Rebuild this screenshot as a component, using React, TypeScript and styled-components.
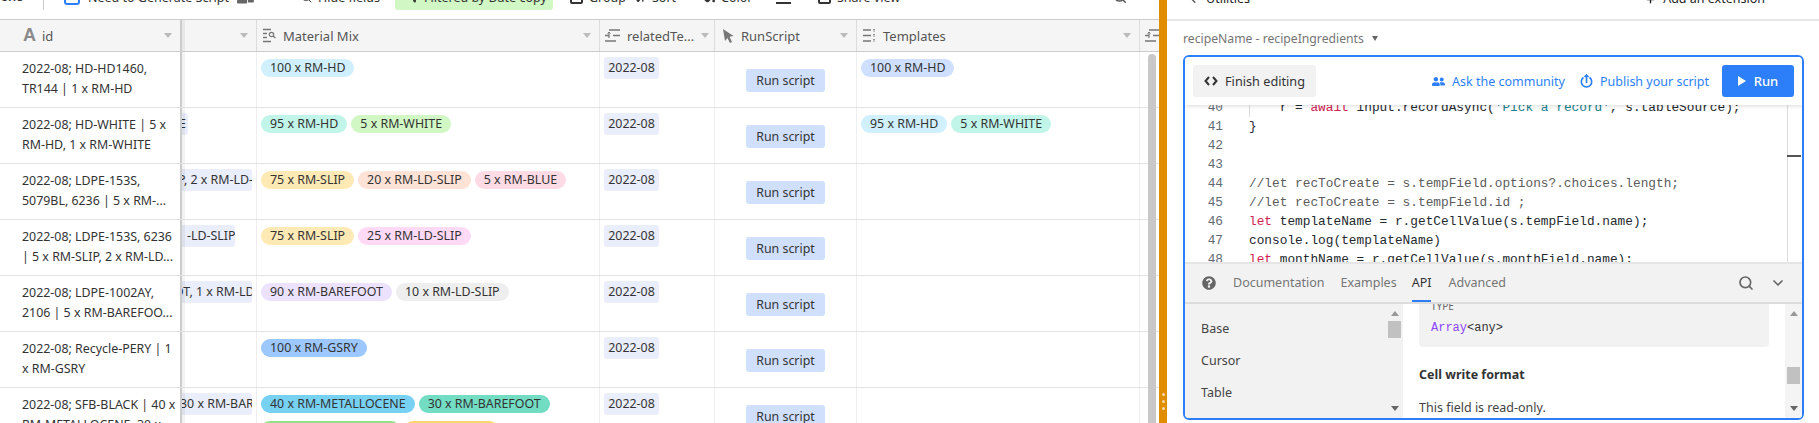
import React from "react";
import styled, { createGlobalStyle } from "styled-components";
import { FaQuestionCircle, FaUserFriends, FaFillDrip } from "react-icons/fa";
import { Search, ChevronDown, ChevronLeft, Plus, ArrowDownUp, EyeOff, Filter } from "lucide-react";

const GlobalStyle = createGlobalStyle`
  html, body {
    margin: 0;
    height: 423px;
    overflow: hidden;
    background: #fff;
    font-family: "Noto Sans", "Liberation Sans", sans-serif;
    font-size: 12.4px;
    color: #333;
  }
`;

const COLUMNS = "182px 75px 343px 115px 142px 283px 1fr";

type Pill = { label: string; color: string };
type Row = {
  id: string[];
  partial?: { label: string; width: number; indent: number };
  mix: Pill[];
  templates: Pill[];
};

const ROWS: Row[] = [
  {
    id: ["2022-08; HD-HD1460,", "TR144 | 1 x RM-HD"],
    mix: [{ label: "100 x RM-HD", color: "#d0f0fd" }],
    templates: [{ label: "100 x RM-HD", color: "#cfdfff" }],
  },
  {
    id: ["2022-08; HD-WHITE | 5 x", "RM-HD, 1 x RM-WHITE"],
    partial: { label: "E", width: 6, indent: -3 },
    mix: [
      { label: "95 x RM-HD", color: "#c2f5e9" },
      { label: "5 x RM-WHITE", color: "#d1f7c4" },
    ],
    templates: [
      { label: "95 x RM-HD", color: "#d0f0fd" },
      { label: "5 x RM-WHITE", color: "#c2f5e9" },
    ],
  },
  {
    id: ["2022-08; LDPE-153S,", "5079BL, 6236 | 5 x RM-..."],
    partial: { label: "P, 2 x RM-LD-SLIP", width: 70, indent: -4 },
    mix: [
      { label: "75 x RM-SLIP", color: "#ffeab6" },
      { label: "20 x RM-LD-SLIP", color: "#fee2d5" },
      { label: "5 x RM-BLUE", color: "#ffdce5" },
    ],
    templates: [],
  },
  {
    id: ["2022-08; LDPE-153S, 6236", "| 5 x RM-SLIP, 2 x RM-LD..."],
    partial: { label: "-LD-SLIP", width: 53, indent: 5 },
    mix: [
      { label: "75 x RM-SLIP", color: "#ffeab6" },
      { label: "25 x RM-LD-SLIP", color: "#ffdaf6" },
    ],
    templates: [],
  },
  {
    id: ["2022-08; LDPE-1002AY,", "2106 | 5 x RM-BAREFOO..."],
    partial: { label: "OT, 1 x RM-LD-SLIP", width: 70, indent: -8 },
    mix: [
      { label: "90 x RM-BAREFOOT", color: "#ede2fe" },
      { label: "10 x RM-LD-SLIP", color: "#eeeeee" },
    ],
    templates: [],
  },
  {
    id: ["2022-08; Recycle-PERY | 1", "x RM-GSRY"],
    mix: [{ label: "100 x RM-GSRY", color: "#9cc7ff" }],
    templates: [],
  },
  {
    id: ["2022-08; SFB-BLACK | 40 x", "RM-METALLOCENE, 30 x ..."],
    partial: { label: "30 x RM-BAREFOOT", width: 70, indent: -2 },
    mix: [
      { label: "40 x RM-METALLOCENE", color: "#77d1f3" },
      { label: "30 x RM-BAREFOOT", color: "#72ddc3" },
      { label: "20 x RM-BLACK-BASE", color: "#93e088" },
      { label: "10 x RM-SLIP", color: "#ffd66e" },
    ],
    templates: [],
  },
];

type Token = { text: string; kind?: "kw" | "str" | "com" };

const CODE: { no: number; tokens: Token[] }[] = [
  {
    no: 40,
    tokens: [
      { text: "    r = " },
      { text: "await", kind: "kw" },
      { text: " input.recordAsync(" },
      { text: "'Pick a record'", kind: "str" },
      { text: ", s.tableSource);" },
    ],
  },
  { no: 41, tokens: [{ text: "}" }] },
  { no: 42, tokens: [] },
  { no: 43, tokens: [] },
  { no: 44, tokens: [{ text: "//let recToCreate = s.tempField.options?.choices.length;", kind: "com" }] },
  { no: 45, tokens: [{ text: "//let recToCreate = s.tempField.id ;", kind: "com" }] },
  {
    no: 46,
    tokens: [{ text: "let", kind: "kw" }, { text: " templateName = r.getCellValue(s.tempField.name);" }],
  },
  { no: 47, tokens: [{ text: "console.log(templateName)" }] },
  {
    no: 48,
    tokens: [{ text: "let", kind: "kw" }, { text: " monthName = r.getCellValue(s.monthField.name);" }],
  },
];

const Caret = () => <CaretMark />;

const LookupIcon = () => (
  <FieldSvg width="13" height="15" viewBox="0 0 13 15" fill="none" stroke="#777" strokeWidth="1.5">
    <path d="M0 1.500h8M0 5.500h4M0 9.500h4M0 13.500h8" />
    <circle cx="8.500" cy="6.500" r="2.200" strokeWidth="1.200" />
    <path d="M10 8l2.500 2" strokeWidth="1.200" />
  </FieldSvg>
);

const FormulaIcon = () => (
  <FieldSvg width="15" height="13" viewBox="0 0 15 13" fill="none" stroke="#777" strokeWidth="1.500">
    <path d="M4 1h11M0 6.500h4M8 6.500h7M0 12h11" />
    <path d="M4 4v5" strokeWidth="1.200" />
    <path d="M2.500 4.500L4 3l1.500 1.500" strokeWidth="1" />
  </FieldSvg>
);

const CursorIcon = () => (
  <FieldSvg width="11" height="14" viewBox="0 0 11 14" fill="#777">
    <path d="M0 0l10.500 7-4 .8L9 13l-2 1-2.600-5L2 12z" />
  </FieldSvg>
);

const TemplatesIcon = () => (
  <FieldSvg width="13" height="13" viewBox="0 0 13 13" fill="none" stroke="#777" strokeWidth="1.500">
    <path d="M0 1h8M0 6.500h8M0 12h8" />
    <path d="M11 0v3M11 5v3M11 10v3" strokeDasharray="1.500 1" />
  </FieldSvg>
);

const CodeBracketsIcon = () => (
  <svg width="14" height="10" viewBox="0 0 14 10" fill="none" stroke="#333" strokeWidth="2">
    <path d="M5 1L1.500 5 5 9M9 1l3.500 4L9 9" />
  </svg>
);

const PublishIcon = () => (
  <svg width="13" height="14" viewBox="0 0 13 14" fill="none" stroke="#2d7ff9" strokeWidth="1.600">
    <path d="M3.500 3.500a5.200 5.200 0 1 0 6 0" />
    <path d="M6.500 9V1M4.500 3l2-2 2 2" />
  </svg>
);

const ScrollArrow = ({ down }: { down?: boolean }) => <ArrowMark $down={down} />;

const App = () => (
  <>
    <GlobalStyle />
    <Page>
      <LeftPane>
        <Toolbar>
          <ViewsGroup>Views</ViewsGroup>
          <ToolDivider />
          <ToolGroup $width={236} $gap={8}>
            <ViewIcon />
            Need to Generate Script
            <FaUserFriends size={17} color="#666" />
          </ToolGroup>
          <ToolGroup $width={95} $gap={6}>
            <EyeOff size={12} color="#333" />
            Hide fields
          </ToolGroup>
          <FilterChip>
            <Filter size={11} color="#333" fill="#333" />
            Filtered by Date copy
          </FilterChip>
          <ToolGroup $width={82} $gap={6} $inset={17}>
            <ToolBox />
            Group
          </ToolGroup>
          <ToolGroup $width={68} $gap={6}>
            <ArrowDownUp size={11} color="#333" strokeWidth={3} />
            Sort
          </ToolGroup>
          <ToolGroup $width={73} $gap={6}>
            <FaFillDrip size={12} color="#333" />
            Color
          </ToolGroup>
          <ToolGroup $width={42} $gap={0}>
            <ToolLines />
          </ToolGroup>
          <ToolGroup $width={295} $gap={6}>
            <ToolBox />
            Share view
          </ToolGroup>
          <ToolGroup $width={16} $gap={0}>
            <Search size={14} color="#555" strokeWidth={2.500} />
          </ToolGroup>
        </Toolbar>
        <Grid>
          <HeaderRow>
            <FrozenHeader>
              <FieldLetter>A</FieldLetter>
              <HeaderLabel>id</HeaderLabel>
              <Caret />
            </FrozenHeader>
            <HeaderCell>
              <HeaderLabel />
              <Caret />
            </HeaderCell>
            <HeaderCell>
              <LookupIcon />
              <HeaderLabel>Material Mix</HeaderLabel>
              <Caret />
            </HeaderCell>
            <HeaderCell $compact>
              <FormulaIcon />
              <HeaderLabel>relatedTe...</HeaderLabel>
              <Caret />
            </HeaderCell>
            <HeaderCell $inset={8}>
              <CursorIcon />
              <HeaderLabel>RunScript</HeaderLabel>
              <Caret />
            </HeaderCell>
            <HeaderCell>
              <TemplatesIcon />
              <HeaderLabel>Templates</HeaderLabel>
              <Caret />
            </HeaderCell>
            <TrailingHeader>
              <FormulaIcon />
            </TrailingHeader>
          </HeaderRow>
          {ROWS.map((row) => (
            <DataRow key={row.id[0]}>
              <FrozenCell>
                {row.id.map((line) => (
                  <IdLine key={line}>{line}</IdLine>
                ))}
              </FrozenCell>
              <Cell>
                {row.partial && (
                  <PartialChip $width={row.partial.width} $indent={row.partial.indent}>
                    {row.partial.label}
                  </PartialChip>
                )}
              </Cell>
              <PillCell>
                {row.mix.map((pill) => (
                  <Tag key={pill.label} $color={pill.color}>{pill.label}</Tag>
                ))}
              </PillCell>
              <DateCell>
                <DateChip>2022-08</DateChip>
              </DateCell>
              <ButtonCell>
                <RunScriptButton>Run script</RunScriptButton>
              </ButtonCell>
              <PillCell>
                {row.templates.map((pill) => (
                  <Tag key={pill.label} $color={pill.color}>{pill.label}</Tag>
                ))}
              </PillCell>
              <Cell />
            </DataRow>
          ))}
          <GridScrollbar />
        </Grid>
      </LeftPane>
      <Splitter>
        <SplitterDot />
        <SplitterDot />
        <SplitterDot />
      </Splitter>
      <RightPane>
        <PaneTop>
          <PaneTopLabel>
            <ChevronLeft size={11} strokeWidth={3} color="#555" />
            Utilities
          </PaneTopLabel>
          <PaneTopLabel>
            <Plus size={11} strokeWidth={3} color="#222" />
            Add an extension
          </PaneTopLabel>
        </PaneTop>
        <ScriptName>
          recipeName - recipeIngredients
          <NameCaret />
        </ScriptName>
        <ScriptBox>
          <ScriptToolbar>
            <FinishButton>
              <CodeBracketsIcon />
              Finish editing
            </FinishButton>
            <ToolLink $ml="auto">
              <FaUserFriends size={13} color="#2d7ff9" />
              Ask the community
            </ToolLink>
            <ToolLink $ml="15px">
              <PublishIcon />
              Publish your script
            </ToolLink>
            <RunButton>
              <PlayMark />
              Run
            </RunButton>
          </ScriptToolbar>
          <Editor>
            <CodeLines>
              {CODE.map((line) => (
                <CodeLine key={line.no}>
                  <LineNo>{line.no}</LineNo>
                  <pre>
                    {line.tokens.map((t, i) => (
                      <Tok key={i} $kind={t.kind}>{t.text}</Tok>
                    ))}
                  </pre>
                </CodeLine>
              ))}
            </CodeLines>
            <IndentGuide />
            <OverviewRuler>
              <RulerMark />
            </OverviewRuler>
          </Editor>
          <Docs>
            <DocsTabs>
              <FaQuestionCircle size={14} color="#666" />
              <DocTab $ml={17}>Documentation</DocTab>
              <DocTab $ml={16}>Examples</DocTab>
              <DocTab $ml={15} $active>API</DocTab>
              <DocTab $ml={17}>Advanced</DocTab>
              <Search size={16} color="#666" strokeWidth={2.500} style={{ marginLeft: "auto" }} />
              <ChevronDown size={16} color="#666" strokeWidth={2.500} style={{ marginLeft: 16, marginRight: 16 }} />
            </DocsTabs>
            <DocsBody>
              <DocsNav>
                <NavItem>Base</NavItem>
                <NavItem>Cursor</NavItem>
                <NavItem>Table</NavItem>
                <NavScroll>
                  <ScrollArrow />
                  <ScrollThumb $top={10} />
                  <ScrollArrow down />
                </NavScroll>
              </DocsNav>
              <DocsContent>
                <TypeBox>
                  <TypeLabel>TYPE</TypeLabel>
                  <TypeCode>
                    <TypeName>Array</TypeName>&lt;any&gt;
                  </TypeCode>
                </TypeBox>
                <DocsHeading>Cell write format</DocsHeading>
                <DocsText>This field is read-only.</DocsText>
                <ContentScroll>
                  <ScrollArrow />
                  <ScrollThumb $top={56} />
                  <ScrollArrow down />
                </ContentScroll>
              </DocsContent>
            </DocsBody>
          </Docs>
        </ScriptBox>
      </RightPane>
    </Page>
  </>
);

export default App;

const Page = styled.div`
  display: flex;
  width: 1819px;
  height: 423px;
  overflow: hidden;
`;

const LeftPane = styled.div`
  width: 1159px;
  flex: none;
  display: flex;
  flex-direction: column;
`;

const Toolbar = styled.div`
  height: 19px;
  flex: none;
  display: flex;
  align-items: flex-end;
  overflow: hidden;
  padding-bottom: 9px;
  box-sizing: border-box;
  white-space: nowrap;
  font-size: 12.500px;
  color: #333;
`;

const ToolGroup = styled.div<{ $width: number; $gap: number; $inset?: number }>`
  flex: none;
  box-sizing: border-box;
  width: ${(p) => p.$width}px;
  height: 26px;
  padding-left: ${(p) => p.$inset ?? 0}px;
  display: flex;
  align-items: center;
  gap: ${(p) => p.$gap}px;
`;

const ViewsGroup = styled.div`
  flex: none;
  width: 43px;
  height: 26px;
  line-height: 26px;
  box-sizing: border-box;
  padding-right: 20px;
  display: flex;
  justify-content: flex-end;
  overflow: hidden;
`;

const ToolDivider = styled.span`
  flex: none;
  width: 1px;
  height: 26px;
  background: #ccc;
  margin-right: 20px;
`;

const ViewIcon = styled.span`
  width: 16px;
  height: 16px;
  box-sizing: border-box;
  border: 2px solid #2d7ff9;
  border-radius: 3px;
`;

const FilterChip = styled.div`
  flex: none;
  height: 26px;
  width: 158px;
  box-sizing: border-box;
  padding-left: 14px;
  display: flex;
  align-items: center;
  gap: 4px;
  border-radius: 3px;
  background: #d1f7c4;
`;

const ToolBox = styled.span`
  width: 13px;
  height: 13px;
  box-sizing: border-box;
  border: 2px solid #333;
  border-radius: 2px;
`;

const ToolLines = styled.span`
  width: 15px;
  height: 12px;
  border-bottom: 2px solid #333;
`;

const Grid = styled.div`
  position: relative;
  flex: 1;
  overflow: hidden;
`;

const HeaderRow = styled.div`
  display: grid;
  grid-template-columns: ${COLUMNS};
  height: 33px;
  box-sizing: border-box;
  background: #f5f5f5;
  border-top: 1px solid #ccc;
  border-bottom: 1px solid #ccc;
`;

const HeaderCell = styled.div<{ $compact?: boolean; $inset?: number }>`
  display: flex;
  align-items: center;
  gap: 7px;
  padding: 0 ${(p) => (p.$compact ? 9 : 8)}px 0 ${(p) => p.$inset ?? (p.$compact ? 5 : 6)}px;
  border-right: 1px solid #ddd;
  min-width: 0;
  overflow: hidden;
`;

const TrailingHeader = styled(HeaderCell)`
  padding: 0 0 0 5px;
  border-right: 0;
`;

const FrozenHeader = styled(HeaderCell)`
  position: relative;
  z-index: 1;
  padding-left: 23px;
  border-right: 2px solid #ccc;
  box-shadow: 3px 0 0 rgba(0, 0, 0, 0.05);
  overflow: visible;
  gap: 6px;
`;

const FieldSvg = styled.svg`
  flex: none;
`;

const FieldLetter = styled.span`
  font-family: "Liberation Sans", sans-serif;
  font-size: 18px;
  font-weight: 700;
  color: #8a8a8a;
`;

const HeaderLabel = styled.span`
  flex: 1;
  font-size: 13px;
  color: #555;
  white-space: nowrap;
`;

const CaretMark = styled.span`
  flex: none;
  width: 0;
  height: 0;
  border-left: 4px solid transparent;
  border-right: 4px solid transparent;
  border-top: 5px solid #bbb;
`;

const DataRow = styled.div`
  display: grid;
  grid-template-columns: ${COLUMNS};
  height: 56px;
  box-sizing: border-box;
  border-bottom: 1px solid #e2e2e2;
`;

const Cell = styled.div`
  border-right: 1px solid #eee;
  overflow: hidden;
  padding-top: 4px;
  &:last-child {
    border-right: 0;
  }
`;

const FrozenCell = styled.div`
  position: relative;
  z-index: 1;
  background: #fff;
  border-right: 2px solid #ccc;
  box-shadow: 3px 0 0 rgba(0, 0, 0, 0.05);
  padding: 7px 0 0 22px;
  white-space: nowrap;
  overflow: hidden;
`;

const IdLine = styled.div`
  line-height: 20px;
  height: 20px;
  color: #333;
`;

const PartialChip = styled.div<{ $width: number; $indent: number }>`
  width: ${(p) => p.$width}px;
  height: 22px;
  line-height: 22px;
  margin-top: 1px;
  text-indent: ${(p) => p.$indent}px;
  background: #eaeefa;
  border-radius: 0 3px 3px 0;
  overflow: hidden;
  white-space: nowrap;
`;

const PillCell = styled(Cell)`
  display: flex;
  flex-wrap: wrap;
  align-content: flex-start;
  gap: 8px 4px;
  padding: 7px 0 0 4px;
`;

const Tag = styled.span<{ $color: string }>`
  height: 18px;
  line-height: 18px;
  padding: 0 9px;
  border-radius: 9px;
  background: ${(p) => p.$color};
  white-space: nowrap;
  color: #333;
`;

const DateCell = styled(Cell)`
  padding: 5px 0 0 4px;
`;

const DateChip = styled.span`
  display: inline-block;
  height: 22px;
  line-height: 22px;
  width: 55px;
  text-align: center;
  background: #eaeefa;
  border-radius: 3px;
`;

const ButtonCell = styled(Cell)`
  display: flex;
  justify-content: center;
  padding-top: 17px;
`;

const RunScriptButton = styled.button`
  width: 79px;
  height: 23px;
  padding: 0;
  border: 0;
  border-radius: 3px;
  background: #cfdffc;
  font: inherit;
  color: #333;
`;

const GridScrollbar = styled.div`
  position: absolute;
  z-index: 2;
  left: 1148px;
  top: 35px;
  bottom: 0;
  width: 8px;
  background: #c8c8c8;
  border-radius: 4px 4px 0 0;
`;

const Splitter = styled.div`
  width: 8px;
  flex: none;
  background: #e08d00;
  display: flex;
  flex-direction: column;
  align-items: center;
  justify-content: flex-end;
  gap: 4px;
  padding-bottom: 13px;
  box-sizing: border-box;
`;

const SplitterDot = styled.span`
  width: 3px;
  height: 3px;
  border-radius: 50%;
  background: #f6dcae;
`;

const RightPane = styled.div`
  flex: 1;
  min-width: 0;
  display: flex;
  flex-direction: column;
`;

const PaneTop = styled.div`
  height: 21px;
  flex: none;
  box-sizing: border-box;
  border-bottom: 2px solid #e5e5e5;
  overflow: hidden;
  display: flex;
  align-items: flex-end;
  justify-content: space-between;
  padding: 0 54px 11px 21px;
  white-space: nowrap;
  color: #222;
`;

const PaneTopLabel = styled.span`
  display: flex;
  align-items: center;
  gap: 7px;
  font-size: 12.500px;
  line-height: 18px;
`;

const ScriptName = styled.div`
  height: 34px;
  flex: none;
  display: flex;
  align-items: center;
  gap: 8px;
  padding-left: 16px;
  color: #757575;
  font-size: 12.200px;
`;

const NameCaret = styled.span`
  width: 0;
  height: 0;
  border-left: 3.500px solid transparent;
  border-right: 3.500px solid transparent;
  border-top: 5px solid #666;
`;

const ScriptBox = styled.div`
  width: 621px;
  height: 365px;
  margin-left: 16px;
  flex: none;
  box-sizing: border-box;
  border: 2px solid #2d7ff9;
  border-radius: 6px;
  display: flex;
  flex-direction: column;
  overflow: hidden;
`;

const ScriptToolbar = styled.div`
  position: relative;
  z-index: 1;
  height: 48px;
  flex: none;
  box-sizing: border-box;
  padding: 8px;
  display: flex;
  align-items: center;
  background: #fff;
  box-shadow: 0 1px 4px rgba(0, 0, 0, 0.15);
`;

const FinishButton = styled.button`
  width: 123px;
  height: 32px;
  padding: 0;
  border: 0;
  border-radius: 3px;
  background: #f2f2f2;
  display: flex;
  align-items: center;
  justify-content: center;
  gap: 7px;
  font: inherit;
  font-size: 12.700px;
  color: #333;
`;

const ToolLink = styled.span<{ $ml: string }>`
  margin-left: ${(p) => p.$ml};
  display: flex;
  align-items: center;
  gap: 7px;
  color: #2d7ff9;
  font-size: 12.500px;
`;

const RunButton = styled.button`
  width: 72px;
  height: 32px;
  margin-left: 13px;
  padding: 0;
  border: 0;
  border-radius: 3px;
  background: #2d7ff9;
  color: #fff;
  font: inherit;
  font-size: 13px;
  font-weight: 500;
  display: flex;
  align-items: center;
  justify-content: center;
  gap: 8px;
`;

const PlayMark = styled.span`
  width: 0;
  height: 0;
  border-top: 5px solid transparent;
  border-bottom: 5px solid transparent;
  border-left: 8px solid #fff;
`;

const Editor = styled.div`
  position: relative;
  flex: 1;
  min-height: 0;
  overflow: hidden;
`;

const CodeLines = styled.div`
  margin-top: -7px;
  font-family: "Liberation Mono", monospace;
  font-size: 12.800px;
  color: #24292e;
`;

const CodeLine = styled.div`
  display: flex;
  height: 19px;
  line-height: 19px;
  & pre {
    margin: 0;
    font: inherit;
  }
`;

const LineNo = styled.span`
  width: 38px;
  margin-right: 26px;
  text-align: right;
  color: #5f6b73;
  flex: none;
`;

const Tok = styled.span<{ $kind?: "kw" | "str" | "com" }>`
  color: ${(p) =>
    p.$kind === "kw" ? "#d0214f" : p.$kind === "str" ? "#20808d" : p.$kind === "com" ? "#5c5c5c" : "inherit"};
`;

const IndentGuide = styled.div`
  position: absolute;
  left: 64px;
  top: 0;
  width: 1px;
  height: 12px;
  background: #ddd;
`;

const OverviewRuler = styled.div`
  position: absolute;
  right: 14px;
  top: 0;
  bottom: 0;
  width: 1px;
  background: #ddd;
`;

const RulerMark = styled.div`
  width: 14px;
  height: 2px;
  margin-top: 50px;
  background: #555;
`;

const Docs = styled.div`
  height: 154px;
  flex: none;
  display: flex;
  flex-direction: column;
  border-top: 2px solid #e5e5e5;
  background: #f2f2f2;
`;

const DocsTabs = styled.div`
  height: 40px;
  flex: none;
  box-sizing: border-box;
  border-bottom: 2px solid #ddd;
  display: flex;
  align-items: center;
  padding-left: 17px;
`;

const DocTab = styled.span<{ $ml: number; $active?: boolean }>`
  margin-left: ${(p) => p.$ml}px;
  height: 38px;
  line-height: 38px;
  font-size: 12.500px;
  color: ${(p) => (p.$active ? "#333" : "#757575")};
  box-shadow: ${(p) => (p.$active ? "inset 0 -2px 0 #2d7ff9" : "none")};
`;

const DocsBody = styled.div`
  flex: 1;
  min-height: 0;
  display: grid;
  grid-template-columns: 218px 1fr;
`;

const DocsNav = styled.div`
  position: relative;
  padding: 9px 0 0 16px;
  overflow: hidden;
`;

const NavItem = styled.div`
  height: 32px;
  line-height: 32px;
  color: #444;
  font-size: 12.500px;
`;

const NavScroll = styled.div`
  position: absolute;
  top: 0;
  bottom: 0;
  right: 2px;
  width: 13px;
  display: flex;
  flex-direction: column;
  justify-content: space-between;
  align-items: center;
  padding: 7px 0;
  box-sizing: border-box;
`;

const ContentScroll = styled(NavScroll)`
  right: 0;
  width: 17px;
  background: #f4f4f4;
`;

const ScrollThumb = styled.div<{ $top: number }>`
  position: absolute;
  left: 0;
  right: 0;
  top: ${(p) => p.$top + 7}px;
  height: 17px;
  background: #c1c1c1;
  ${ContentScroll} & {
    left: 2px;
    right: 2px;
  }
`;

const ArrowMark = styled.span<{ $down?: boolean }>`
  width: 0;
  height: 0;
  border-left: 4px solid transparent;
  border-right: 4px solid transparent;
  ${(p) => (p.$down ? "border-top: 5px solid #666;" : "border-bottom: 5px solid #999;")}
`;

const DocsContent = styled.div`
  position: relative;
  background: #fff;
  overflow: hidden;
  padding: 0 34px 0 16px;
`;

const TypeBox = styled.div`
  margin-top: -6px;
  height: 49px;
  box-sizing: border-box;
  background: #f2f2f2;
  border-radius: 0 0 4px 4px;
  padding-left: 12px;
  width: 350px;
`;

const TypeLabel = styled.div`
  height: 17px;
  line-height: 17px;
  font-size: 10px;
  color: #666;
`;

const TypeCode = styled.div`
  margin-top: 4px;
  height: 18px;
  line-height: 18px;
  font-family: "Liberation Mono", monospace;
  font-size: 12px;
  color: #333;
`;

const TypeName = styled.span`
  color: #8b46ff;
`;

const DocsHeading = styled.div`
  margin-top: 18px;
  height: 20px;
  line-height: 20px;
  font-weight: 700;
  font-size: 12.500px;
  color: #333;
`;

const DocsText = styled.div`
  margin-top: 13px;
  height: 20px;
  line-height: 20px;
  font-size: 12.500px;
  color: #444;
`;
